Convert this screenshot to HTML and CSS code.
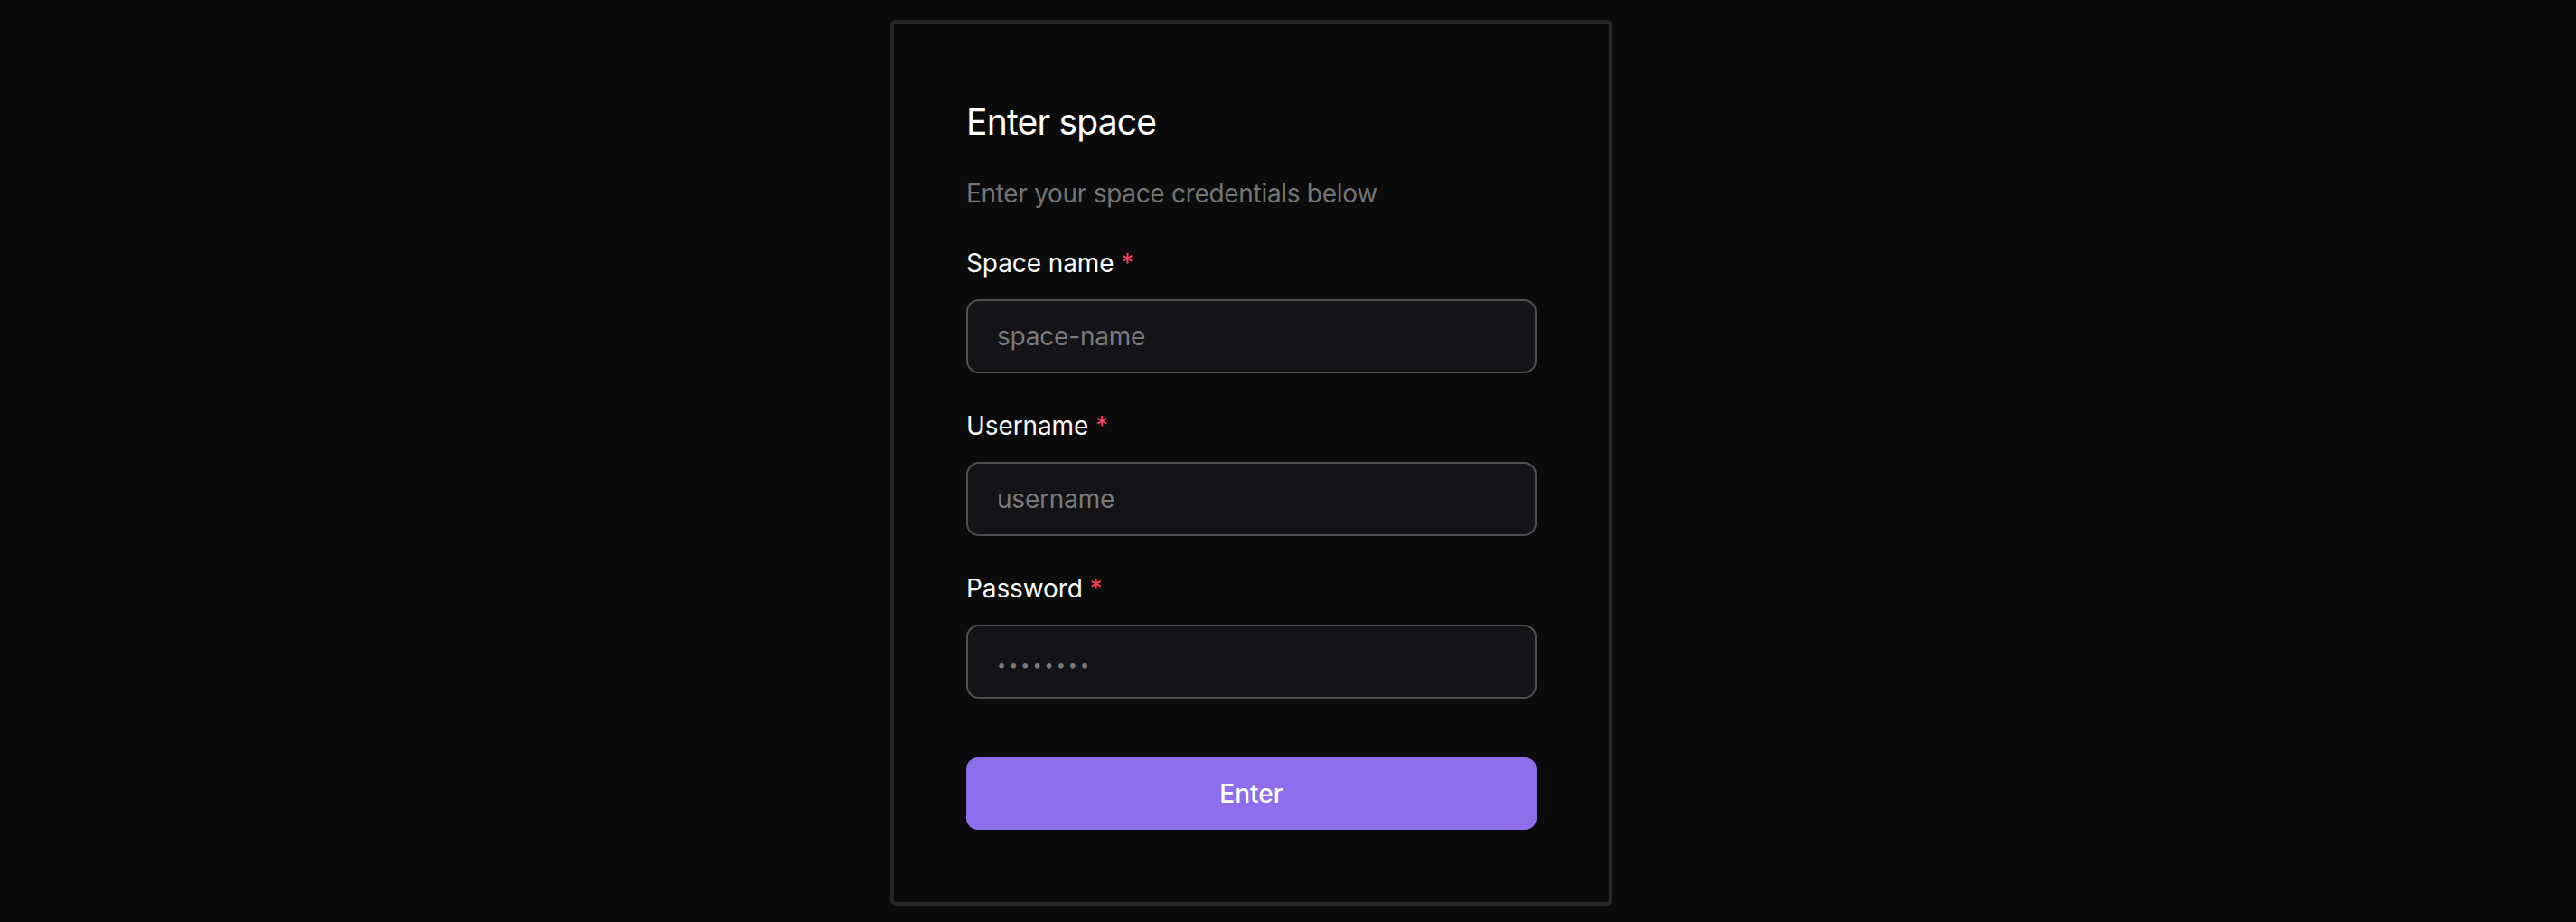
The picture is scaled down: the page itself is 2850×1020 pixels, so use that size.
FILE: index.html
```html
<!DOCTYPE html>
<html lang="en">
  <head>
    <meta charset="UTF-8" />
    <meta name="viewport" content="width=device-width, initial-scale=1.0" />
    <title>Enter space</title>
    <link rel="stylesheet" href="styles.css">
  </head>
  <body>
    <div id="page_wrap">
      <div class="card">
        <div class="card_header">
          <h1 class="title">Enter space</h1>
          <p class="subtitle">Enter your space credentials below</p>
        </div>
        <form class="space_form">
          <div class="field">
            <label for="space">Space name <span class="required">*</span></label>
            <input id="space" type="text" placeholder="space-name" />
          </div>
          <div class="field">
            <label for="username">Username <span class="required">*</span></label>
            <input id="username" type="text" placeholder="username" />
          </div>
          <div class="field">
            <label for="password">Password <span class="required">*</span></label>
            <input id="password" type="password" placeholder="••••••••" />
          </div>
          <button type="button" class="submit_btn">Enter</button>
        </form>
      </div>
    </div>
  </body>
</html>
```

FILE: styles.css
```css
* {
  margin: 0;
  padding: 0;
  box-sizing: border-box;
}
body {
  background: #0b0b0b;
  font-family: Inter, "Noto Sans", sans-serif;
  color: #fafafa;
}
#page_wrap {
  display: flex;
  justify-content: center;
  align-items: flex-start;
  width: 100%;
  height: 100vh;
  padding: 22px 81px 0 0; /* card sits a bit left of center */
}
.card {
  width: 799px;
  height: 980px;
  background: #0b0b0b;
  border: 4px solid #262626;
  border-radius: 6px;
  padding: 85px 80px 80px;
}
.card_header {
  display: flex;
  flex-direction: column;
  gap: 35px;
  margin-bottom: 37px;
}
.title {
  font-size: 39px;
  font-weight: 400;
  line-height: 48px;
  letter-spacing: -0.8px;
  color: #fff;
}
.subtitle {
  font-size: 28px;
  line-height: 40px;
  letter-spacing: -0.3px;
  color: #737373;
}
.space_form {
  display: flex;
  flex-direction: column;
  gap: 38px;
}
.field {
  display: flex;
  flex-direction: column;
  gap: 20px;
}
.field label {
  font-size: 28px;
  font-weight: 400;
  line-height: 40px;
  letter-spacing: -0.1px;
  color: #fafafa;
}
.required {
  color: #f43f5e;
}
.field input {
  width: 100%;
  height: 82px;
  padding: 0 32px;
  background: #131318;
  border: 2px solid #4f4f4f;
  border-radius: 14px;
  font-family: inherit;
  font-size: 28px;
  letter-spacing: -0.2px;
  color: #fafafa;
  outline: none;
}
.field input::placeholder {
  color: #7a7a7a;
}
#password::placeholder {
  font-size: 18px;
  letter-spacing: 3px;
}
.submit_btn {
  margin-top: 27px; /* 38 + 27 = 65 */
  height: 80px;
  width: 100%;
  border: none;
  border-radius: 13px;
  background: #8f6eee;
  color: #fff;
  font-family: inherit;
  font-size: 28px;
  font-weight: 500;
  cursor: pointer;
}
```
